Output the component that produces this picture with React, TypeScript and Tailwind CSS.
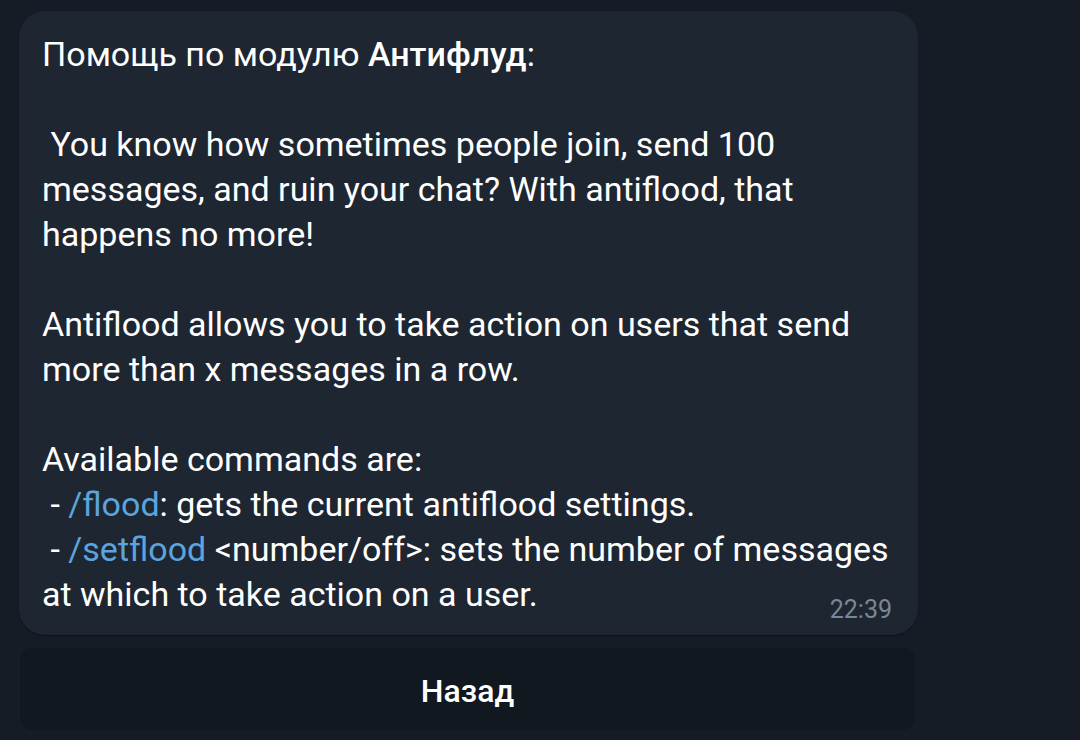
export default function App() {
  return (
    <div
      className="w-[1080px] h-[740px] bg-[#161c25] pt-[11px] pl-[19px] flex flex-col overflow-hidden"
      style={{ fontFamily: "Roboto, 'Noto Sans', sans-serif" }}
    >
      {/* message bubble */}
      <div className="relative w-[899px] h-[624px] rounded-[26px] bg-[#1e2631] shadow-[0_1px_1px_rgba(0,0,0,0.35)] pl-[23px] pt-[21px]">
        <div className="text-[34px] leading-[45px] text-white whitespace-pre-wrap">
          <div>
            Помощь по модулю <span className="font-medium">Антифлуд</span>:
          </div>
          <div>&nbsp;</div>
          <div> You know how sometimes people join, send 100</div>
          <div>messages, and ruin your chat? With antiflood, that</div>
          <div>happens no more!</div>
          <div>&nbsp;</div>
          <div>Antiflood allows you to take action on users that send</div>
          <div>more than x messages in a row.</div>
          <div>&nbsp;</div>
          <div>Available commands are:</div>
          <div>
            {" - "}
            <span className="text-[#5ba4dd]">/flood</span>: gets the current antiflood settings.
          </div>
          <div>
            {" - "}
            <span className="text-[#5ba4dd]">/setflood</span> &lt;number/off&gt;: sets the number of messages
          </div>
          <div>at which to take action on a user.</div>
        </div>
        <span className="absolute right-[26px] bottom-[10px] text-[25px] leading-[30px] text-[#7b8795]">
          22:39
        </span>
      </div>

      {/* inline keyboard button */}
      <button className="mt-[13px] ml-[1px] w-[895px] h-[82px] rounded-[12px] bg-[#121820] text-white text-[32px] font-medium flex items-center justify-center pt-[4px]">
        Назад
      </button>
    </div>
  );
}
